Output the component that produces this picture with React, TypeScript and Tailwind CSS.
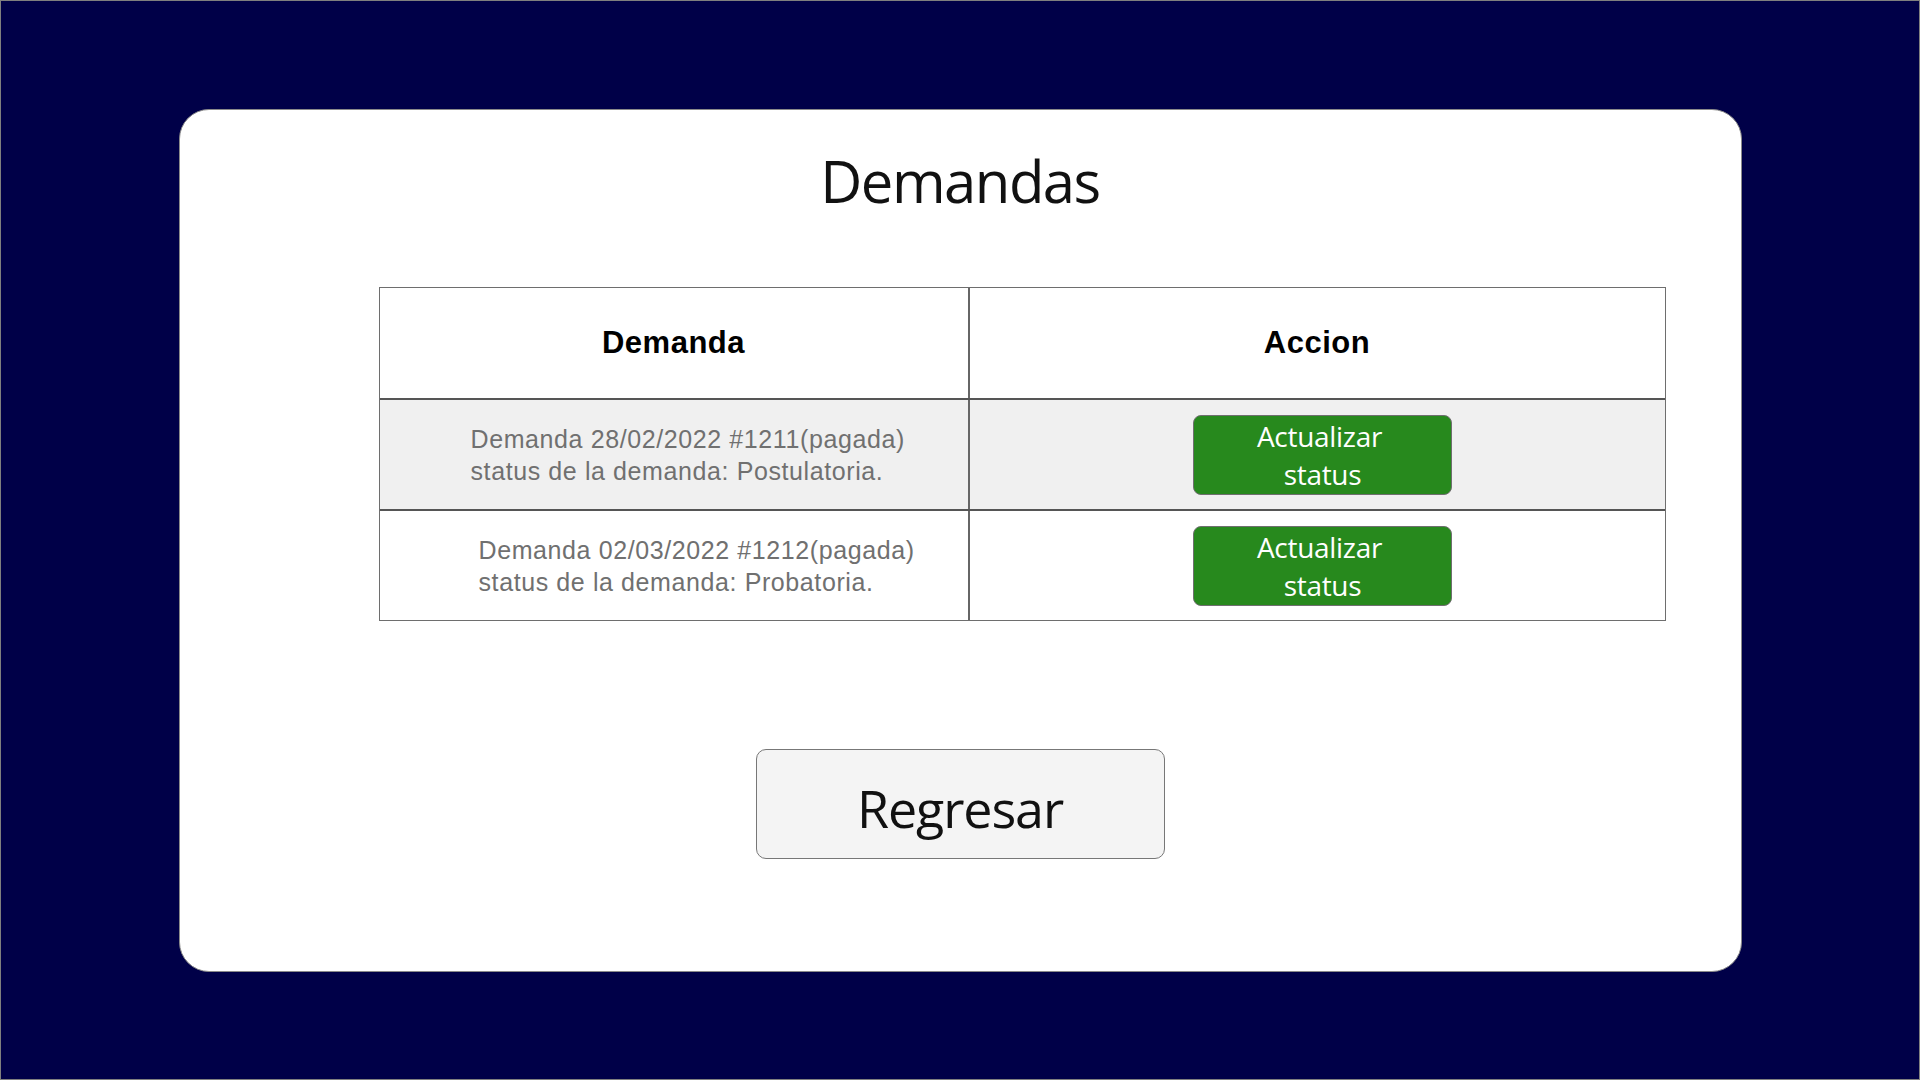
import React from "react";

const rows = [
  {
    line1: "Demanda 28/02/2022 #1211(pagada)",
    line2: "status de la demanda: Postulatoria.",
    bg: "bg-[#f0f0f0]",
    pad: "pl-[91px]",
  },
  {
    line1: "Demanda 02/03/2022 #1212(pagada)",
    line2: "status de la demanda: Probatoria.",
    bg: "bg-white",
    pad: "pl-[99px]",
  },
];

export default function App() {
  return (
    <div className="h-[1080px] w-[1920px] border border-[#7f7f7f] bg-[#000048] pt-[108px]">
      <div className="mx-auto h-[863px] w-[1563px] rounded-[30px] border border-[#8a8a8a] bg-white">
        <h1 className="mt-[31px] h-[80px] text-center font-['Open_Sans',sans-serif] text-[58px] leading-[80px] tracking-[-1.5px] text-[#111111]">
          Demandas
        </h1>

        <div className="ml-[199px] mt-[66px] w-[1287px] border border-[#6e6e6e] font-['Liberation_Sans',Arial,sans-serif]">
          <div className="flex h-[110px]">
            <div className="flex w-[590px] items-center justify-center border-r-2 border-[#666666] text-[31px] font-bold tracking-[0.5px] text-black">
              Demanda
            </div>
            <div className="flex flex-1 items-center justify-center text-[31px] font-bold tracking-[0.5px] text-black">
              Accion
            </div>
          </div>

          {rows.map((r, i) => (
            <div key={i} className={`flex h-[111px] border-t-2 border-[#555555] ${r.bg}`}>
              <div className={`flex w-[590px] flex-col justify-center border-r-2 border-[#666666] ${r.pad} text-[25px] leading-[32px] tracking-[0.6px] text-[#707070]`}>
                <span>{r.line1}</span>
                <span>{r.line2}</span>
              </div>
              <div className="flex flex-1 items-center justify-center pl-[11px]">
                <button className="flex h-[80px] w-[259px] flex-col items-center justify-center rounded-[8px] border border-[#6f6f6f] bg-[#27891d] font-['Open_Sans',sans-serif] text-[28px] leading-[38px] tracking-[-0.3px] text-white">
                  <span className="pr-[6px]">Actualizar</span>
                  <span>status</span>
                </button>
              </div>
            </div>
          ))}
        </div>

        <button className="mx-auto mt-[128px] flex h-[110px] w-[409px] items-center justify-center rounded-[10px] border border-[#777777] bg-[#f4f4f4] pt-[7px] font-['Open_Sans',sans-serif] text-[52px] tracking-[-1.1px] text-[#111111]">
          Regresar
        </button>
      </div>
    </div>
  );
}
